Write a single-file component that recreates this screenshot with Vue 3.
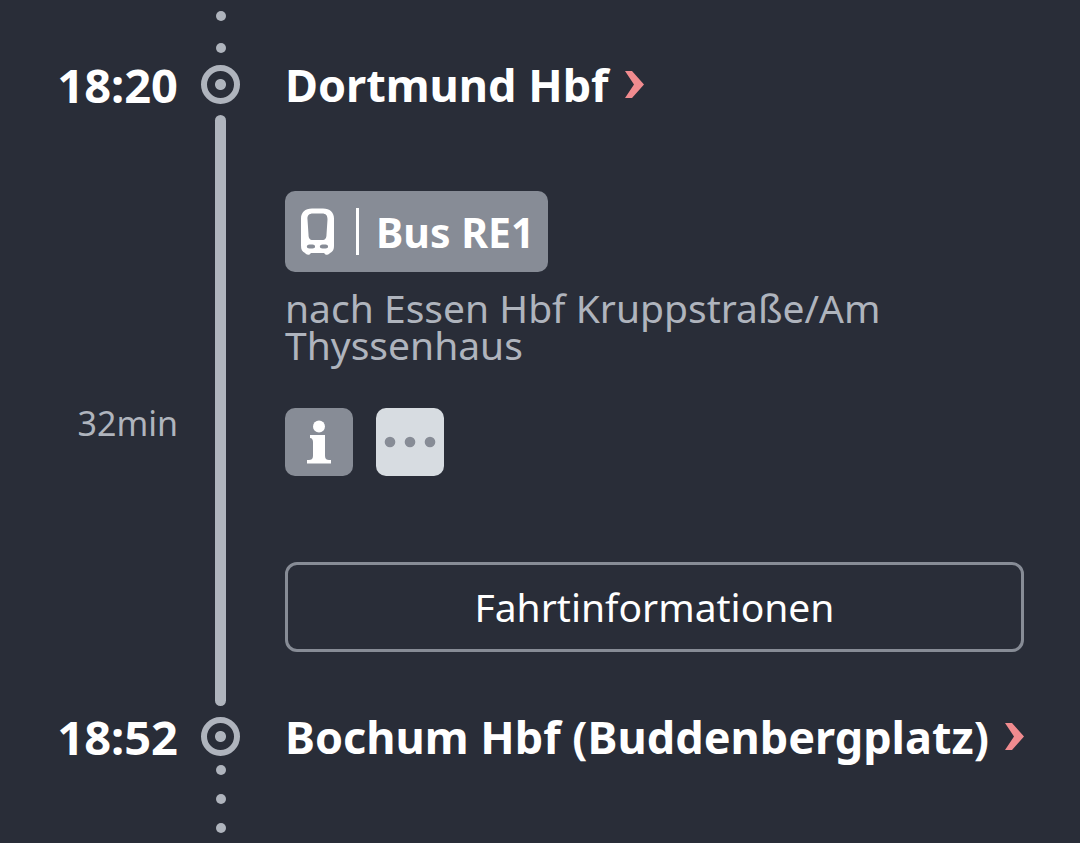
<script setup>
const product = { name: 'Bus RE1', direction: 'nach Essen Hbf Kruppstraße/Am Thyssenhaus' }
const duration = '32min'
</script>

<template>
  <main class="journey">
    <div class="row">
      <div class="dots before"><i></i><i></i></div>
    </div>

    <section class="row stop">
      <time class="time">18:20</time>
      <span class="ring"></span>
      <a class="station" href="#dortmund">
        Dortmund Hbf
        <svg class="chevron" viewBox="0 0 20 30" aria-hidden="true"><path d="M0 1h7l12 13.500L7 28H0l9-13.500z" /></svg>
      </a>
    </section>

    <section class="row leg">
      <span class="duration">{{ duration }}</span>
      <span class="bar"></span>
      <div class="details">
        <div class="badge">
          <svg class="train" viewBox="0 0 34 47" aria-hidden="true">
            <path
              fill-rule="evenodd"
              d="M12 0.500h11c7 0 11 4 11 10v27c0 4-1 6-4 7.500l-1 1c-1 1-4 1-4 0l-1-1H11l-1 1c0 1-3 1-4 0l-1-1c-3-1.500-4-3.500-4-7.500v-27c0-6 4-10 11-10zM13 5.500c-4 0-6 2-5.500 6l1 15c0 3.500 1 5.500 4.500 5.500h9c3.500 0 4.500-2 4.500-5.500l1-15c0-4-1.500-6-5.500-6zM9.500 36.500c-3.500 0-3.500 4 0 4h3c3.500 0 3.500-4 0-4zm13 0c-3.500 0-3.500 4 0 4h3c3.500 0 3.500-4 0-4z"
            />
          </svg>
          <span class="divider"></span>
          <strong class="line-name">{{ product.name }}</strong>
        </div>
        <p class="direction">{{ product.direction }}</p>
        <div class="actions">
          <button class="tile info" type="button" aria-label="Information">
            <svg viewBox="0 0 68 68" aria-hidden="true">
              <circle cx="34" cy="18.500" r="6" />
              <path d="M25 27h15v21c0 3 2 4 4 4h2v3.500H22V52h2c2 0 4-1 4-4V34c0-2-1-4-3-4z" />
            </svg>
          </button>
          <button class="tile more" type="button" aria-label="Mehr">
            <svg viewBox="0 0 68 68" aria-hidden="true">
              <circle cx="14" cy="34" r="5.300" />
              <circle cx="34" cy="34" r="5.300" />
              <circle cx="54" cy="34" r="5.300" />
            </svg>
          </button>
        </div>
        <button class="trip" type="button">Fahrtinformationen</button>
      </div>
    </section>

    <section class="row stop">
      <time class="time">18:52</time>
      <span class="ring"></span>
      <a class="station" href="#bochum">
        Bochum Hbf (Buddenbergplatz)
        <svg class="chevron" viewBox="0 0 20 30" aria-hidden="true"><path d="M0 1h7l12 13.500L7 28H0l9-13.500z" /></svg>
      </a>
    </section>

    <div class="row">
      <div class="dots after"><i></i><i></i><i></i></div>
    </div>
  </main>
</template>

<style>
body {
  background: #292d38;
}
</style>

<style scoped>
.journey {
  box-sizing: border-box;
  min-height: 100vh;
  padding-right: 56px;
  overflow: hidden;
  background: #292d38;
  color: #fff;
  font-family: "Noto Sans", "Open Sans", sans-serif;
}
.row {
  display: grid;
  grid-template-columns: 178px 39px minmax(0, 1fr);
  column-gap: 23px;
}
.dots {
  grid-column: 2;
  display: flex;
  flex-direction: column;
  align-items: center;
}
.dots i {
  width: 10px;
  height: 10px;
  border-radius: 50%;
  background: #afb4bd;
}
.before {
  gap: 22px;
  padding: 11px 0 12px;
}
.after {
  gap: 19px;
  padding-top: 9px;
}
.stop {
  height: 39px;
  align-items: center;
}
.time,
.station {
  font-weight: 700;
  line-height: 38px;
  white-space: nowrap;
}
.time {
  font-size: 47px;
  text-align: right;
}
.ring {
  box-sizing: border-box;
  width: 39px;
  height: 39px;
  border: 6px solid #afb4bd;
  border-radius: 50%;
  background: radial-gradient(circle, #afb4bd 5px, transparent 6px);
}
.station {
  display: flex;
  align-items: center;
  gap: 16px;
  padding-left: 22px;
  color: #fff;
  font-size: 45px;
  text-decoration: none;
}
.chevron {
  flex: none;
  width: 20px;
  height: 30px;
  fill: #f08b8f;
}
.duration {
  align-self: center;
  padding-top: 24px;
  color: #afb4bd;
  font-size: 34px;
  line-height: 40px;
  text-align: right;
}
.bar {
  justify-self: center;
  width: 11px;
  margin: 11px 0;
  border-radius: 6px;
  background: #afb4bd;
}
.details {
  padding: 87px 0 65px 22px;
}
.badge {
  box-sizing: border-box;
  display: flex;
  align-items: center;
  width: fit-content;
  height: 81px;
  padding: 0 14px 0 15px;
  border-radius: 10px;
  background: #878c96;
}
.train {
  width: 34px;
  height: 47px;
  fill: #fff;
}
.divider {
  width: 3px;
  height: 47px;
  margin: 0 17px 0 22px;
  background: #fff;
}
.line-name {
  font-size: 41px;
  line-height: 48px;
}
.direction {
  margin: 17px 0 45px;
  color: #afb4bd;
  font-size: 39px;
  line-height: 37px;
}
.actions {
  display: flex;
  gap: 23px;
  margin-bottom: 86px;
}
.tile {
  width: 68px;
  height: 68px;
  padding: 0;
  border: 0;
  border-radius: 10px;
}
.tile svg {
  display: block;
}
.info {
  background: #878c96;
  fill: #fff;
}
.more {
  background: #d7dce1;
  fill: #878c96;
}
.trip {
  box-sizing: border-box;
  display: block;
  width: 100%;
  height: 90px;
  padding: 0 0 2px;
  border: 3px solid #878c96;
  border-radius: 12px;
  background: transparent;
  color: #fff;
  font: inherit;
  font-size: 39px;
}
</style>
